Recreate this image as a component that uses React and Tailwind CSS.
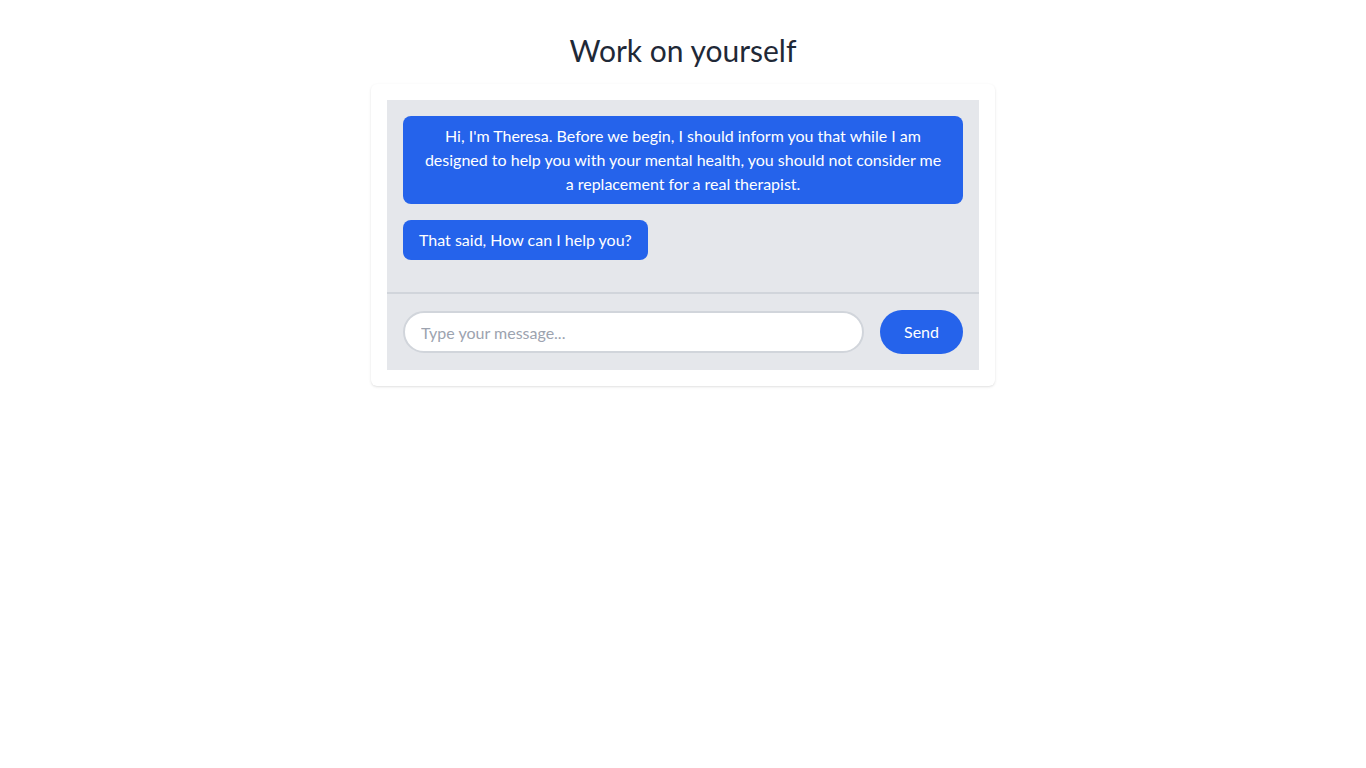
const messages = [
  "Hi, I'm Theresa. Before we begin, I should inform you that while I am designed to help you with your mental health, you should not consider me a replacement for a real therapist.",
  "That said, How can I help you?",
];

export default function App() {
  return (
    <div className="min-h-screen bg-white pt-8 font-['Lato','Noto_Sans',sans-serif] text-[#1f2937]">
      <h1 className="mb-4 text-center text-3xl">Work on yourself</h1>

      <div className="mx-auto w-[624px] rounded-md bg-white p-4 shadow">
        <div className="bg-[#e5e7eb]">
          <div className="p-4">
            {messages.map((text) => (
              <div key={text} className="mb-4 w-fit rounded-lg bg-[#2563eb] px-4 py-2 text-center text-base leading-6 text-white">
                {text}
              </div>
            ))}
          </div>

          <div className="flex items-center gap-4 border-t-2 border-[#d1d5db] p-4">
            <input
              type="text"
              placeholder="Type your message..."
              className="h-[42px] flex-1 rounded-full border-2 border-[#d1d5db] bg-white px-4 text-base text-[#1f2937] outline-none placeholder:text-[#9ca3af]"
            />
            <button className="h-11 rounded-full bg-[#2563eb] px-6 text-base text-white">Send</button>
          </div>
        </div>
      </div>
    </div>
  );
}
